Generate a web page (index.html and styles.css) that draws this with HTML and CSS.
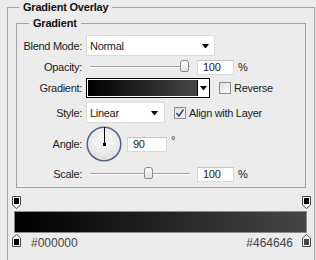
FILE: index.html
```html
<!DOCTYPE html>
<html lang="en">
<head>
    <meta charset="UTF-8">
    <title>Gradient Overlay</title>
    <link rel="stylesheet" href="styles.css">
</head>
<body>

    <fieldset class="group outer">
        <legend>Gradient Overlay</legend>

        <fieldset class="group inner">
            <legend>Gradient</legend>

            <!-- Blend Mode -->
            <div class="row row-blend">
                <span class="lbl">Blend Mode:</span>
                <div class="select select-blend">Normal<span class="caret"></span></div>
            </div>

            <!-- Opacity -->
            <div class="row row-opacity">
                <span class="lbl">Opacity:</span>
                <div class="slider"><span class="thumb" style="left: 94px"></span></div>
                <div class="num">100</div>
                <span class="unit">%</span>
            </div>

            <!-- Gradient -->
            <div class="row row-gradient">
                <span class="lbl">Gradient:</span>
                <div class="swatch">
                    <div class="swatch-fill"></div>
                    <div class="swatch-drop"><span class="caret"></span></div>
                </div>
                <label class="check check-reverse">
                    <span class="box"></span>
                    <span>Reverse</span>
                </label>
            </div>

            <!-- Style -->
            <div class="row row-style">
                <span class="lbl">Style:</span>
                <div class="select select-style">Linear<span class="caret"></span></div>
                <label class="check check-align">
                    <span class="box">
                        <svg width="10" height="10" viewBox="0 0 10 10">
                            <path d="M1.5 5 L4 8 L8.5 1.5" fill="none" stroke="#2f4590" stroke-width="1.6"/>
                        </svg>
                    </span>
                    <span>Align with Layer</span>
                </label>
            </div>

            <!-- Angle -->
            <div class="row row-angle">
                <span class="lbl">Angle:</span>
                <svg class="dial" width="36" height="36" viewBox="0 0 36 36">
                    <defs>
                        <radialGradient id="dialFill" cx="50%" cy="40%" r="60%">
                            <stop offset="0" stop-color="#fbfbfb"/>
                            <stop offset="1" stop-color="#e0e0e0"/>
                        </radialGradient>
                    </defs>
                    <circle cx="18" cy="18" r="16.8" fill="url(#dialFill)" stroke="#56638c" stroke-width="1.5"/>
                    <line x1="18.5" y1="18" x2="18.5" y2="1" stroke="#000" stroke-width="1"/>
                    <rect x="17" y="17" width="3" height="3" fill="#000"/>
                </svg>
                <div class="num num-angle">90</div>
                <span class="deg">&deg;</span>
            </div>

            <!-- Scale -->
            <div class="row row-scale">
                <span class="lbl">Scale:</span>
                <div class="slider"><span class="thumb" style="left: 58px"></span></div>
                <div class="num">100</div>
                <span class="unit">%</span>
            </div>
        </fieldset>

        <!-- Gradient editor -->
        <div class="editor">
            <div class="stops stops-top">
                <svg class="stop stop-left" width="9" height="13" viewBox="0 0 9 13">
                    <path d="M0.5 0.5 H8.5 V9 L4.5 12.5 L0.5 9 Z" fill="#f4f4f4" stroke="#4a4a4a"/>
                    <rect x="2" y="2" width="5" height="6" fill="#000"/>
                </svg>
                <svg class="stop stop-right" width="9" height="13" viewBox="0 0 9 13">
                    <path d="M0.5 0.5 H8.5 V9 L4.5 12.5 L0.5 9 Z" fill="#f4f4f4" stroke="#4a4a4a"/>
                    <rect x="2" y="2" width="5" height="6" fill="#000"/>
                </svg>
            </div>
            <div class="bar"></div>
            <div class="stops stops-bottom">
                <svg class="stop stop-left" width="9" height="13" viewBox="0 0 9 13">
                    <path d="M4.5 0.5 L8.5 4 V12.5 H0.5 V4 Z" fill="#f4f4f4" stroke="#4a4a4a"/>
                    <rect x="2" y="5" width="5" height="6" fill="#000"/>
                </svg>
                <span class="hex">#000000</span>
                <span class="hex">#464646</span>
                <svg class="stop stop-right" width="9" height="13" viewBox="0 0 9 13">
                    <path d="M4.5 0.5 L8.5 4 V12.5 H0.5 V4 Z" fill="#f4f4f4" stroke="#4a4a4a"/>
                    <rect x="2" y="5" width="5" height="6" fill="#464646"/>
                </svg>
            </div>
        </div>
    </fieldset>

</body>
</html>
```

FILE: styles.css
```css
body {
    margin: 0;
    width: 316px;
    height: 260px;
    overflow: hidden;
    background-color: #ececec;
    font-family: "Liberation Sans", Arial, sans-serif;
    font-size: 11px;
    letter-spacing: -0.3px;
    color: #1c1c1c;
}

/* Group boxes */
.group {
    margin: 0;
    padding: 0;
    min-width: 0;
    border: 1px solid #a2a2a2;
}

.group > legend {
    font-weight: bold;
    font-size: 11px;
    line-height: 13px;
    letter-spacing: -0.2px;
    padding: 0 4px;
    color: #111;
}

/* outer box runs on below the window, so no bottom edge */
.outer {
    margin: 1px 1px 0 7px;
    padding-bottom: 13px;
    border-bottom: none;
}

.outer > legend {
    margin-left: 11px;
}

.inner {
    margin: 3px 8px 0 8px;
    padding-bottom: 4px;
}

.inner > legend {
    margin-left: 12px;
}

/* Rows */
.row {
    display: flex;
    align-items: center;
}

.lbl {
    width: 65px;
    margin-right: 4px;
    text-align: right;
    flex-shrink: 0;
}

.row-blend {
    height: 21px;
    margin-top: 5px;
}

.row-opacity {
    height: 20px;
    margin-top: 1px;
}

.row-gradient {
    height: 20px;
    margin-top: 1px;
}

.row-style {
    height: 21px;
    margin-top: 4px;
}

.row-angle {
    height: 36px;
    margin-top: 3px;
}

.row-scale {
    height: 18px;
    margin-top: 3px;
}

/* Dropdowns */
.select {
    height: 21px;
    box-sizing: border-box;
    display: flex;
    align-items: center;
    padding-left: 3px;
    background-color: #fff;
    border: 1px solid #dadada;
}

.select-blend {
    width: 129px;
}

.select-style {
    width: 79px;
}

.caret {
    width: 1px;
    height: 0;
    margin-left: auto;
    border-left: 3px solid transparent;
    border-right: 3px solid transparent;
    border-top: 4px solid #000;
}

.select-blend .caret {
    margin-right: 5px;
}

.select-style .caret {
    margin-right: 6px;
}

/* Sliders */
.slider {
    position: relative;
    width: 100px;
    height: 1px;
    margin-left: 4px;
    background-color: #a4a4a4;
    border-bottom: 1px solid #fff;
}

.thumb {
    position: absolute;
    top: -6px;
    width: 9px;
    height: 12px;
    box-sizing: border-box;
    margin-left: -4px;
    border: 1px solid #8c8c8c;
    border-radius: 3px 3px 2px 2px;
    background: linear-gradient(#fdfdfd, #e2e2e2);
}

/* Number fields */
.num {
    width: 37px;
    height: 15px;
    box-sizing: border-box;
    margin-left: 7px;
    padding-left: 5px;
    line-height: 13px;
    background-color: #fff;
    border: 1px solid #d8d8d8;
    border-top-color: #c4c4c4;
}

.num-angle {
    width: 40px;
    margin-left: 5px;
}

.unit {
    margin-left: 4px;
}

.deg {
    align-self: flex-start;
    margin-top: 8px;
    margin-left: 4px;
}

/* Gradient swatch */
.swatch {
    width: 124px;
    height: 20px;
    box-sizing: border-box;
    display: flex;
    padding: 1px;
    background-color: #fff;
    border: 1px solid #000;
}

.swatch-fill {
    flex: 1;
    background: linear-gradient(to right, #000, #464646);
}

.swatch-drop {
    width: 10px;
    display: flex;
    align-items: center;
    border-left: 1px solid #000;
    background-color: #fff;
}

.swatch-drop .caret {
    margin: 0 auto;
}

/* Checkboxes */
.check {
    display: flex;
    align-items: center;
    margin-left: 9px;
}

.check .box {
    width: 12px;
    height: 12px;
    box-sizing: border-box;
    margin-right: 3px;
    display: flex;
    align-items: center;
    justify-content: center;
    border: 1px solid #8e8f8f;
    background: linear-gradient(135deg, #dcdcdc, #fafafa);
}

.dial {
    display: block;
}

/* Gradient editor */
.editor {
    margin: 8px 7px 0 6px;
}

.stops {
    position: relative;
    height: 13px;
}

.stop {
    position: absolute;
    top: 0;
}

.stop-left {
    left: -2px;
}

.stop-right {
    right: -4px;
}

.bar {
    height: 22px;
    box-sizing: border-box;
    margin-top: 2px;
    border: 1px solid #8a8a8a;
    background: linear-gradient(to right, #000, #464646);
}

.stops-bottom {
    margin-top: 1px;
    display: flex;
    justify-content: space-between;
    padding: 3px 14px 0 17px;
    font-size: 12px;
    line-height: 13px;
    letter-spacing: 0;
    color: #444;
}
```
